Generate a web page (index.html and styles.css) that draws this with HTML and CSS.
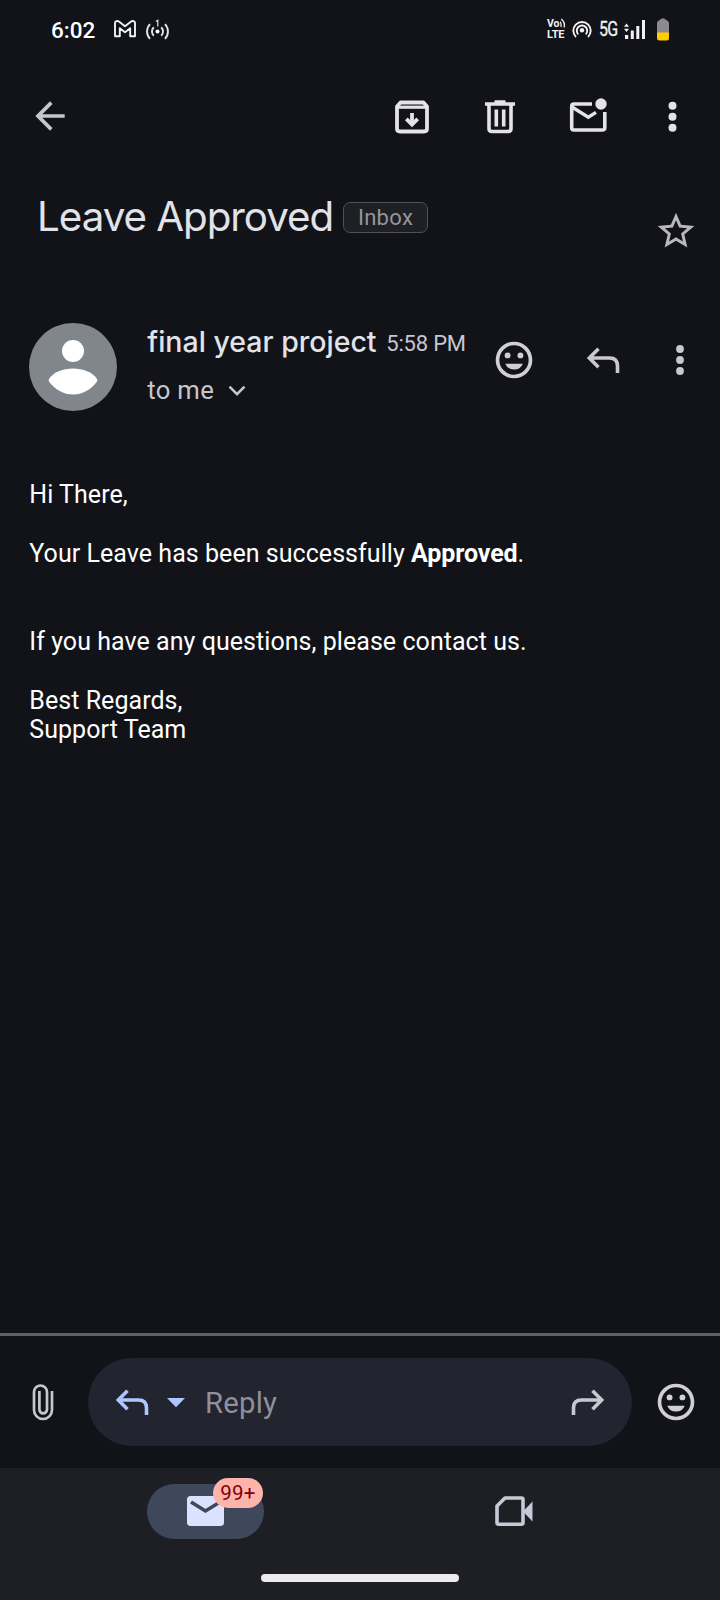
FILE: index.html
```html
<!DOCTYPE html>
<html lang="en">
<head>
<meta charset="utf-8">
<title>Leave Approved</title>
<link rel="stylesheet" href="styles.css">
</head>
<body>
<div class="screen">
  <header class="status">
    <span class="clock">6:02</span>
    <svg class="s-gmail" width="22" height="18" viewBox="0 0 22 18" fill="none" stroke="#f2f2f5" stroke-width="1.9" stroke-linejoin="round"><path d="M1 3.200C1 1 3.400.4 4.900 1.600L11 6.200l6.100-4.600C18.600.4 21 1 21 3.200V16.200H16.200V8.200L11 12.200 5.800 8.200V16.200H1z"/></svg>
    <svg class="s-cast" width="24" height="22" viewBox="0 0 24 22" fill="none" stroke="#e4e4e8" stroke-width="1.900"><circle cx="11.500" cy="12.500" r="2" fill="#fff" stroke="none"/><path d="M7.800 8.200a6 6 0 0 0 0 8.600M15.200 8.200a6 6 0 0 1 0 8.600M4 5.200a10.500 10.500 0 0 0 0 14.600M19 5.200a10.500 10.500 0 0 1 0 14.600"/><path d="M9.800 2.500l2-1.200v6.200" stroke-width="1.200"/></svg>
    <div class="s-right">
      <span class="volte"><span class="vo">Vo</span><svg class="waves" width="6" height="10" viewBox="0 0 6 10" fill="none" stroke="#f2f2f5" stroke-width="1.300"><path d="M0 3.500Q1.700 6 .8 9M1.300 1Q5.600 4.500 4 9.500"/></svg><span class="lte">LTE</span></span>
      <svg class="s-hot" width="20" height="18" viewBox="0 0 20 18" fill="none" stroke="#f2f2f5" stroke-width="1.900"><circle cx="10" cy="10.300" r="2.200" fill="#f2f2f5" stroke="none"/><path d="M6.300 14.300a5.200 5.200 0 1 1 7.400 0M4 17a8.700 8.700 0 1 1 12 0"/></svg>
      <span class="net">5G</span>
      <svg class="s-sig" width="22" height="20" viewBox="0 0 22 20" fill="#f2f2f5"><path d="M0 6.800L2.500 3.500l2.500 3.300zM0 8.700L2.500 12l2.500-3.300zM1 15h3.200v4H1zM6.800 10.500h3V19h-3zM12.300 6h3v13h-3zM18 0h3v19h-3z"/></svg>
      <svg class="s-bat" width="12" height="23" viewBox="0 0 12 23"><path d="M0 5Q0 3 2 2.500L4 1Q6-.5 8 1l2 1.500q2 .5 2 2.500v10H0z" fill="#8b8b8f"/><path d="M0 14.500h12V20q0 2.500-2.500 2.500h-7Q0 22.500 0 20z" fill="#fc0"/></svg>
    </div>
  </header>

  <nav class="toolbar">
    <svg class="ic back" viewBox="0 0 24 24" fill="#c6c6cf"><path d="M20 11H7.830l5.590-5.590L12 4l-8 8 8 8 1.410-1.410L7.830 13H20v-2z"/></svg>
    <svg class="ic tb-arch" viewBox="390 95.500 44 44" fill="none" stroke="#e3e3e8" stroke-width="3.800" stroke-linejoin="round"><path d="M397 107l3.500-4h23l3.500 4v22q0 3-3 3h-24q-3 0-3-3z"/><path d="M398 107.700h28" stroke-width="3.200"/><path d="M412 113.500v10"/><path d="M406.300 119.300l5.700 5.700 5.700-5.700" stroke-linejoin="miter"/></svg>
    <svg class="ic tb-del" viewBox="478 95.500 44 44" fill="none" stroke="#e3e3e8" stroke-width="3.600"><path d="M485 104.500h30M494.500 102.500h11"/><path d="M489 105v24q0 3 3 3h16q3 0 3-3v-24"/><path d="M496.300 110v17M503.700 110v17"/></svg>
    <svg class="ic tb-mail" viewBox="566 95.500 44 44" fill="none" stroke="#e3e3e8" stroke-width="3.600"><circle cx="601" cy="104.500" r="5.700" fill="#e3e3e8" stroke="none"/><path d="M592 104.500h-18q-2.300 0-2.300 2.300v21.400q0 2.300 2.300 2.300h28q2.800 0 2.800-2.300V112.500"/><path d="M572 107.500l16.300 10.200 7.700-4.800" stroke-width="3.400"/></svg>
    <svg class="ic tb-more" viewBox="651 95.500 44 44" fill="#e3e3e8"><circle cx="672.500" cy="106.300" r="4"/><circle cx="672.500" cy="117.300" r="4"/><circle cx="672.500" cy="128.300" r="4"/></svg>
  </nav>

  <section class="subject">
    <h1 class="title">Leave Approved</h1>
    <span class="chip">Inbox</span>
    <svg class="ic star" viewBox="0 0 24 24" fill="#b9b9bd"><path d="M22 9.240l-7.190-.62L12 2 9.190 8.630 2 9.240l5.460 4.730L5.820 21 12 17.270 18.180 21l-1.630-7.030L22 9.240zM12 15.400l-3.760 2.270 1-4.280-3.320-2.880 4.380-.38L12 6.100l1.710 4.040 4.380.38-3.320 2.880 1 4.280L12 15.400z"/></svg>
  </section>

  <section class="sender">
    <svg class="avatar" viewBox="0 0 88 88"><circle cx="44" cy="44" r="44" fill="#80868b"/><circle cx="44" cy="28" r="11" fill="#fff"/><path d="M44 45.500c10 0 19.500 3.500 24 10.500q.600 1.200 0 2.400C62 66.500 53.500 71.500 44 71.500S26 66.500 20 58.400q-.600-1.200 0-2.400c4.500-7 14-10.500 24-10.500z" fill="#fff"/></svg>
    <div class="who">
      <div class="line1"><span class="name">final year project</span><span class="time">5:58 PM</span></div>
      <div class="line2"><span class="to">to me</span><svg class="chev" width="18" height="12" viewBox="0 0 18 12" fill="none" stroke="#c6c6cf" stroke-width="2.600"><path d="M1.500 1.700L9 9.200l7.500-7.500"/></svg></div>
    </div>
    <svg class="ic m-smile" viewBox="0 0 24 24" fill="#d0cfd8"><use href="#smile"/></svg>
    <svg class="ic m-reply" viewBox="581 338 44 44" fill="none" stroke="#c9c8d2" stroke-width="3.600"><path id="rep" d="M598.500 348.700L589.300 358l9.200 9.300M589 358h20.500q8 0 8 8v7"/></svg>
    <svg class="ic m-more" viewBox="658 338 44 44" fill="#c9c8d2"><circle cx="680" cy="349" r="3.900"/><circle cx="680" cy="360" r="3.900"/><circle cx="680" cy="371" r="3.900"/></svg>
  </section>

  <main class="body">
    <p>Hi There,</p>
    <p>Your Leave has been successfully <b>Approved</b>.</p>
    <p class="gap">If you have any questions, please contact us.</p>
    <p>Best Regards,<br>Support Team</p>
  </main>

  <section class="replybar">
    <svg class="clip" width="24" height="40" viewBox="31 1382 24 40" fill="none" stroke="#c6c6cf" stroke-width="2.700"><path d="M52 1391v19a9 9 0 0 1-18 0V1392a6.500 6.500 0 0 1 13 0v17.500a3.700 3.700 0 0 1-7.600 0V1391"/></svg>
    <div class="field">
      <svg class="ic f-reply" viewBox="581 338 44 44" fill="none" stroke="#adc6ff" stroke-width="3.600"><use href="#rep"/></svg>
      <svg class="caret" width="18" height="10" viewBox="0 0 18 10" fill="#adc6ff"><path d="M0 0h18L9 9.300z"/></svg>
      <span class="hint">Reply</span>
      <svg class="ic f-fwd" viewBox="581 338 44 44" fill="none" stroke="#c9c8d2" stroke-width="3.600"><use href="#rep" transform="translate(1206 0) scale(-1 1)"/></svg>
    </div>
    <svg class="ic r-smile" viewBox="0 0 24 24" fill="#d0cfd8"><g id="smile"><path fill-rule="evenodd" d="M12 2a10 10 0 1 0 0 20 10 10 0 0 0 0-20zm0 18a8 8 0 1 1 0-16 8 8 0 0 1 0 16z"/><circle cx="8.500" cy="9.500" r="1.600"/><circle cx="15.500" cy="9.500" r="1.600"/><path d="M7.200 14h9.600a5.200 5.200 0 0 1-9.600 0z"/></g></svg>
  </section>

  <footer class="tabs">
    <div class="tabmail">
      <svg class="mailfill" width="37" height="30" viewBox="0 0 37 30"><rect width="37" height="30" rx="3.500" fill="#dae2ff"/><path d="M4 6l14.500 9L33 6" fill="none" stroke="#3f475b" stroke-width="3.600"/></svg>
      <span class="badge">99+</span>
    </div>
    <svg class="video" width="38" height="30" viewBox="0 0 38 30"><path d="M2 10L10 2h16.500q1.500 0 1.500 1.500v23q0 1.700-1.500 1.700h-23Q2 28.200 2 26.500z" fill="none" stroke="#c9c8d6" stroke-width="3.600" stroke-linejoin="round"/><path d="M28 15.500L37.500 5.500v20z" fill="#c9c8d6"/></svg>
    <div class="handle"></div>
  </footer>
</div>
</body>
</html>
```
FILE: styles.css
```css
* { box-sizing: border-box; margin: 0; padding: 0; }
body { background: #111318; font-family: Roboto, "Liberation Sans", sans-serif; color: #e2e2e9; }
svg { display: block; flex: none; }
.screen { width: 720px; height: 1600px; display: flex; flex-direction: column; overflow: hidden; background: #111318; }
.ic { width: 44px; height: 44px; }
span, h1, p { white-space: nowrap; }

.status { height: 60px; display: flex; align-items: flex-start; padding-left: 51px; color: #fff; flex: none; }
.clock { width: 63px; margin-top: 16px; font-size: 22.5px; line-height: 28px; font-weight: 500; }
.s-gmail { margin-top: 20px; }
.s-cast { margin: 19px 0 0 10px; }
.s-right { margin-left: auto; display: flex; padding-right: 51px; color: #f2f2f5; }
.volte { width: 20px; margin-top: 18px; display: flex; flex-wrap: wrap; align-content: flex-start; font-weight: 700; }
.vo { width: 13px; font-size: 10.5px; line-height: 11px; letter-spacing: -.1px; }
.lte { width: 20px; font-size: 11px; line-height: 11px; letter-spacing: -.1px; }
.s-hot { margin: 20px 0 0 5px; }
.net { width: 19px; margin: 17px 0 0 7px; font-size: 19.500px; line-height: 26px; letter-spacing: -1px; transform: scaleX(.82); transform-origin: left; -webkit-text-stroke: .3px #f2f2f5; }
.s-sig { margin: 20px 0 0 6px; }
.s-bat { margin: 18px 0 0 11px; }

.toolbar { height: 95px; display: flex; align-items: flex-start; padding: 35px 0 0 28px; flex: none; }
.back { margin-top: -1px; }
.tb-arch { margin-left: 318px; }
.tb-del, .tb-mail { margin-left: 44px; }
.tb-more { margin-left: 41px; }

.subject { height: 145px; display: flex; align-items: flex-start; flex: none; }
.title { width: 306px; margin: 36px 0 0 37px; font: 400 40.300px/51px Inter, Roboto, sans-serif; letter-spacing: -1.020px; }
.chip { width: 85px; height: 31px; margin-top: 47px; border: 1.500px solid #505157; border-radius: 7px; background: #1f2025; color: #96969c; font-size: 22px; line-height: 30px; text-align: center; letter-spacing: .3px; }
.star { margin: 54px 0 0 226px; }

.sender { height: 180px; display: flex; align-items: flex-start; padding-left: 29.300px; flex: none; }
.avatar { width: 88px; height: 88px; margin-top: 23px; }
.who { width: 374px; margin-left: 30px; padding-top: 23px; }
.line1 { height: 38px; display: flex; }
.name { width: 239px; font: 500 28.500px/38px Inter, Roboto, sans-serif; }
.time { font-size: 22px; line-height: 42px; color: #c6c6cf; letter-spacing: -.2px; }
.line2 { display: flex; height: 38px; margin-top: 10px; }
.to { width: 81px; font-size: 25.700px; line-height: 38px; color: #c6c6cf; letter-spacing: .3px; }
.chev { margin-top: 14px; }
.m-smile { margin: 38px 0 0 -29px; }
.m-reply { margin: 38px 0 0 45px; }
.m-more { margin: 38px 0 0 33px; }

.body { flex: 1; padding: .3px 0 0 29.300px; font-size: 25px; line-height: 29.330px; color: #fff; letter-spacing: .05px; }
.body b { letter-spacing: -.1px; }
.body p { margin-bottom: 29.330px; }
.body .gap { margin-top: 58.660px; }

.replybar { height: 135px; border-top: 3.500px solid #606166; display: flex; align-items: center; padding-left: 31px; flex: none; }
.field { width: 544px; height: 88px; margin-left: 33px; border-radius: 44px; background: #222430; display: flex; align-items: center; padding-left: 22px; }
.caret { margin: 1px 0 0 13px; }
.hint { width: 351px; margin: 2px 0 0 20px; font-size: 29.300px; line-height: 40px; color: #8f9099; letter-spacing: .2px; }
.f-fwd { margin-left: 10px; }
.r-smile { margin-left: 22px; }

.tabs { height: 132px; background: #1e1f25; display: grid; grid-template-columns: 117px 38px; column-gap: 231px; padding: 16px 0 0 147px; align-content: start; flex: none; }
.tabmail { position: relative; height: 55px; border-radius: 28px; background: #3f475b; padding: 12px 0 0 40px; }
.badge { position: absolute; left: 66px; top: -6px; width: 50px; height: 29.500px; border-radius: 15px; background: #ffb4ab; color: #7d0009; font-size: 20.500px; line-height: 30px; text-align: center; letter-spacing: .2px; }
.video { margin-top: 12px; }
.handle { width: 198.500px; height: 8px; border-radius: 4px; background: #ececec; margin: 35px 0 0 113.500px; }
```
